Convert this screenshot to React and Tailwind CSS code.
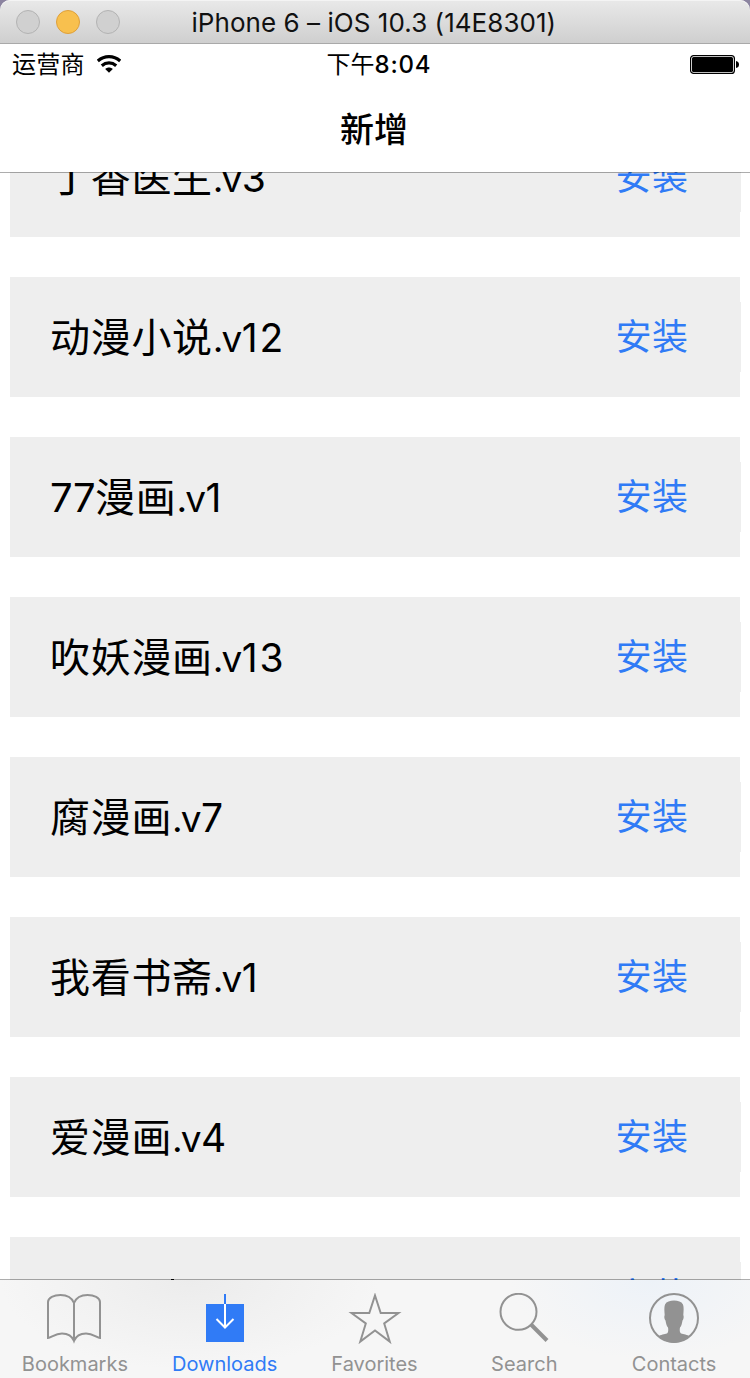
import React from "react";

const apps = [
  { name: "丁香医生", version: "3" },
  { name: "动漫小说", version: "12" },
  { prefix: "77", name: "漫画", version: "1" },
  { name: "吹妖漫画", version: "13" },
  { name: "腐漫画", version: "7" },
  { name: "我看书斋", version: "1" },
  { name: "爱漫画", version: "4" },
];

function TitleBar() {
  return (
    <div className="bg-[#8c84a0]">
      <div className="flex h-11 items-center rounded-t-[10px] border-b border-[#a9a9a9] bg-linear-to-b from-[#e9e9e9] to-[#cfcfcf] shadow-[inset_0_1px_0_#f4f4f4]">
        <div className="flex gap-4 pl-4">
          <span className="size-6 rounded-full border border-[#b3b3b3] bg-[#d0d0d0]" />
          <span className="size-6 rounded-full border border-[#dfa03a] bg-[#f8c04e]" />
          <span className="size-6 rounded-full border border-[#b3b3b3] bg-[#d0d0d0]" />
        </div>
        <h1 className="ml-[71.5px] mt-[2px] whitespace-nowrap text-[26px] leading-8 tracking-[0.05px] text-[#111]">
          iPhone 6 – iOS 10.3 (14E8301)
        </h1>
      </div>
    </div>
  );
}

function WifiIcon() {
  return (
    <svg className="mb-0.5 ml-3 h-[18px] w-6" viewBox="0 0 24 18">
      <path d="M.8 6C7.200 .2 16.800 .2 23.200 6" fill="none" stroke="#000" strokeWidth="3.200" />
      <path d="M4.800 10.700C9 7 15 7 19.200 10.700" fill="none" stroke="#000" strokeWidth="3.200" />
      <path d="M8.200 14C10.500 12 13.500 12 15.800 14L12 17.800Z" />
    </svg>
  );
}

function Header() {
  return (
    <header className="relative z-10 -mb-px h-[129px] border-b border-black/32 bg-white bg-clip-padding">
      <div className="grid h-[42px] grid-cols-3 items-center">
        <div className="flex items-center pl-3">
          <span className="text-[24px] leading-8 tracking-[0.3px]">运营商</span>
          <WifiIcon />
        </div>
        <div className="flex justify-center pl-2 text-[24px] leading-8">
          <span>下午</span>
          <span className="font-medium tracking-[0.8px]">8:04</span>
        </div>
        <div className="flex justify-end pb-px pr-[11px]">
          <svg className="h-[19px] w-[49px]" viewBox="0 0 49 19">
            <rect x=".6" y=".6" width="43.800" height="17.800" rx="3" fill="#fff" stroke="#000" strokeWidth="1.200" />
            <rect x="2" y="2" width="41" height="15" rx="1.500" />
            <path d="M46 6Q49 6.500 49 9.500Q49 12.500 46 13Z" />
          </svg>
        </div>
      </div>
      <h2 className="mt-[19px] pr-0.5 text-center text-[34px] font-medium leading-[50px]">新增</h2>
    </header>
  );
}

const rowClass =
  "flex h-[120px] w-[731px] shrink-0 items-center justify-between bg-[linear-gradient(#eee,#eee)] bg-[length:730px_100%] bg-no-repeat pl-10";

function AppRow({ prefix, name, version }) {
  return (
    <li className={rowClass}>
      <div className="flex items-baseline whitespace-nowrap pt-[2px] text-[40px] leading-[60px]">
        {prefix && <span className="tracking-[-0.5px]">{prefix}</span>}
        <span className="tracking-[0.7px]">{name}</span>
        <span className="tracking-[-2px] text-[37px]">.</span>
        <span className="text-[37px]">v</span>
        <span className="-ml-[0.5px] text-[39px] tracking-[1.8px]">{version}</span>
      </div>
      <button className="h-[70px] w-[178px] bg-[#eee] text-[36px] leading-[54px] tracking-[0.5px] text-[#307bf6]">
        安装
      </button>
    </li>
  );
}

// Row that only just shows above the tab bar.
function PartialRow() {
  return (
    <li className={rowClass}>
      <span className="ml-[121px] mt-[42px] h-9 w-[3px] self-start bg-black" />
      <button className="h-[70px] w-[178px] bg-[#eee] pb-0.5 text-[36px] leading-[54px] tracking-[0.5px] text-[#307bf6]">
        安装
      </button>
    </li>
  );
}

function BookIcon() {
  return (
    <svg className="mr-px h-[52px] w-[56px]" viewBox="0 0 56 52" fill="none" stroke="#929292" strokeWidth="2">
      <path d="M28 48V10C26 5 21 2 14.500 2C8 2 2 4.500 2 9V45C5 45 9 40.500 16 40.500C22 40.500 26 43 28 48C30 43 34 40.500 40 40.500C47 40.500 51 45 54 45V9C54 4.500 48 2 41.500 2C35 2 30 5 28 10" />
    </svg>
  );
}

function DownloadIcon() {
  return (
    <svg className="h-[52px] w-[40px]" viewBox="0 0 40 52" fill="none">
      <path d="M1 11H39V49H1Z" fill="#307bf6" />
      <path d="M20 1V11" stroke="#307bf6" strokeWidth="2" />
      <path d="M20 11V34M11.500 26L20 34.500L28.500 26" stroke="#fff" strokeWidth="2" />
    </svg>
  );
}

function StarIcon() {
  return (
    <svg className="ml-px h-[54px] w-[56px]" viewBox="0 0 56 54" fill="none" stroke="#929292" strokeWidth="2">
      <path d="M28 2.500L33.700 20H51.500L37.200 30.500L42.700 48.500L28 37.500L13.300 48.500L18.800 30.500L4.500 20H22.300Z" />
    </svg>
  );
}

function SearchIcon() {
  return (
    <svg className="h-[52px] w-[52px]" viewBox="0 0 52 52" fill="none" stroke="#929292">
      <circle cx="20.500" cy="18.800" r="18" strokeWidth="2" />
      <path d="M33 31.500L49 47.500" strokeWidth="4" />
    </svg>
  );
}

function ContactIcon() {
  return (
    <svg className="h-[52px] w-[52px]" viewBox="0 0 52 52">
      <circle cx="26" cy="25" r="24" fill="none" stroke="#929292" strokeWidth="2" />
      <path d="M11 43C14 41 18 41.500 19.500 40C20.500 38.500 20.300 36 20 34.500C18.500 33 18 30 17.500 27.500C16.200 26 16 23.500 16.700 22C16.400 18 16 14 17 11.500C18.500 8.500 22 7.500 26 7.500C30 7.500 33.500 8.500 35 11.500C36 14 35.600 18 35.300 22C36 23.500 35.800 26 34.500 27.500C34 30 33.500 33 32 34.500C31.700 36 31.500 38.500 32.500 40C34 41.500 38 41 41 43C33 52 19 52 11 43Z" fill="#929292" />
    </svg>
  );
}

const tabs = [
  { label: "Bookmarks", Icon: BookIcon },
  { label: "Downloads", Icon: DownloadIcon, active: true },
  { label: "Favorites", Icon: StarIcon },
  { label: "Search", Icon: SearchIcon },
  { label: "Contacts", Icon: ContactIcon },
];

function TabBar() {
  return (
    <nav className="relative z-10 -mt-px grid h-[99px] shrink-0 grid-cols-5 border-t border-black/32 bg-[#f6f6f6] bg-[radial-gradient(ellipse_190px_90px_at_190px_0px,#ececec,transparent),radial-gradient(ellipse_140px_80px_at_650px_0px,#edf2f8,transparent)] bg-clip-padding pr-px">
      {tabs.map(({ label, Icon, active }) => (
        <a
          key={label}
          className={
            active
              ? "flex flex-col items-center text-[#307bf6]"
              : "flex flex-col items-center text-[#929292]"
          }
        >
          <span className="mt-[13px] flex h-[54px] items-start">
            <Icon />
          </span>
          <span className="mt-[5px] text-[20px] leading-6">{label}</span>
        </a>
      ))}
    </nav>
  );
}

export default function App() {
  return (
    <div className="flex h-[1378px] w-[750px] flex-col overflow-hidden bg-white font-['Inter','Noto_Sans_CJK_SC',sans-serif] text-black">
      <TitleBar />
      <Header />
      <main className="min-h-0 flex-1 overflow-hidden">
        <ul className="-mt-[55px] flex flex-col gap-10 pl-2.5">
          {apps.map((app) => (
            <AppRow key={app.name + app.version} {...app} />
          ))}
          <PartialRow />
        </ul>
      </main>
      <TabBar />
    </div>
  );
}
